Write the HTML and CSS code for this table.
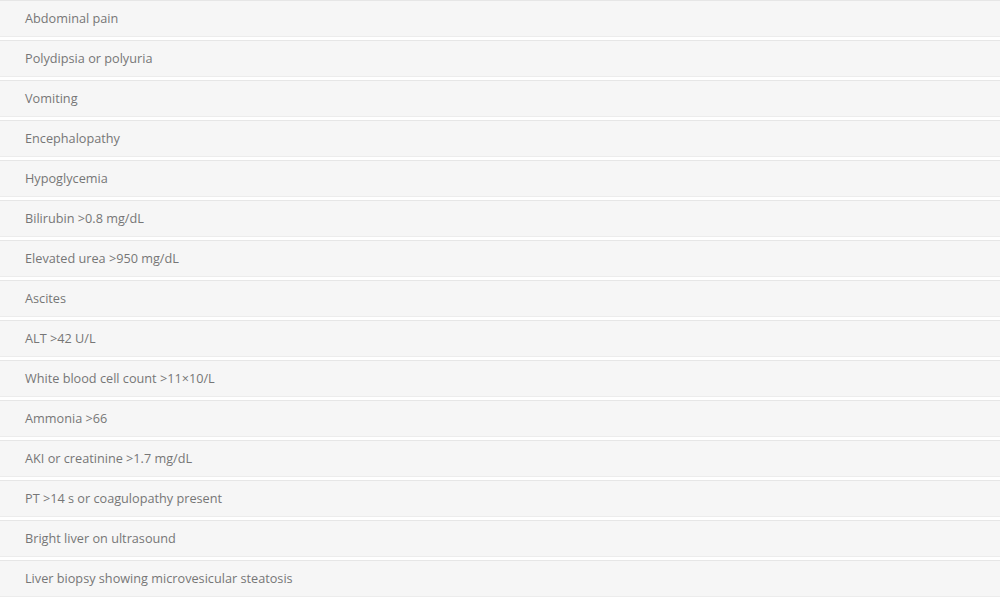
FILE: index.html
```html
<!DOCTYPE html>
<html>
<head>
<meta charset="utf-8">
<link rel="stylesheet" href="styles.css">
</head>
<body>
<ul class="list">
  <li class="item">Abdominal pain</li>
  <li class="item">Polydipsia or polyuria</li>
  <li class="item">Vomiting</li>
  <li class="item">Encephalopathy</li>
  <li class="item">Hypoglycemia</li>
  <li class="item">Bilirubin &gt;0.8 mg/dL</li>
  <li class="item">Elevated urea &gt;950 mg/dL</li>
  <li class="item">Ascites</li>
  <li class="item">ALT &gt;42 U/L</li>
  <li class="item">White blood cell count &gt;11×10/L</li>
  <li class="item">Ammonia &gt;66</li>
  <li class="item">AKI or creatinine &gt;1.7 mg/dL</li>
  <li class="item">PT &gt;14 s or coagulopathy present</li>
  <li class="item">Bright liver on ultrasound</li>
  <li class="item">Liver biopsy showing microvesicular steatosis</li>
</ul>
</body>
</html>
```
FILE: styles.css
```css
html, body {
  margin: 0;
  padding: 0;
  background: #ffffff;
}
body {
  font-family: "Open Sans", "Liberation Sans", sans-serif;
  font-size: 12.7px;
  color: #767676;
}
.list {
  list-style: none;
  margin: 0;
  padding: 0;
}
.item {
  display: flex;
  align-items: center;
  box-sizing: border-box;
  height: 37px;
  padding: 0 0 2px 25px;
  background: #f6f6f6;
  border-top: 1px solid #e6e6e6;
  border-bottom: 1px solid #ececec;
  margin-bottom: 3px;
}
```
